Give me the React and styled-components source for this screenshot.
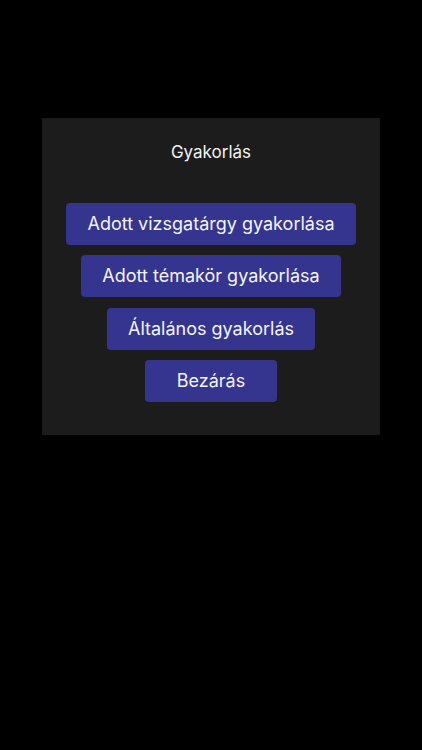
import React from "react";
import styled, { createGlobalStyle } from "styled-components";

const Global = createGlobalStyle`
  html, body {
    margin: 0;
    padding: 0;
    background: #000;
  }
  body {
    font-family: Inter, "Noto Sans", sans-serif;
    -webkit-font-smoothing: antialiased;
  }
`;

const Screen = styled.div`
  width: 422px;
  height: 750px;
  background: #000;
  display: flex;
  flex-direction: column;
  align-items: center;
  padding-top: 118px;
  box-sizing: border-box;
`;

const Dialog = styled.div`
  width: 338px;
  background: #1c1c1c;
  display: flex;
  flex-direction: column;
  align-items: center;
  padding: 24px 0 33px;
  box-sizing: border-box;
`;

const Title = styled.div`
  color: #f2f2f2;
  font-size: 17px;
  line-height: 20px;
  margin-bottom: 41px;
`;

const Actions = styled.div`
  display: flex;
  flex-direction: column;
  align-items: center;
  gap: 10.4px;
`;

const Button = styled.button`
  height: 42px;
  padding: 0 ${(p) => p.$pad || 21}px;
  border: none;
  border-radius: 4px;
  background: #35358f;
  color: #f4f4f8;
  font-family: inherit;
  font-size: 18px;
  line-height: 22px;
  cursor: pointer;
`;

export default function App() {
  return (
    <>
      <Global />
      <Screen>
        <Dialog>
          <Title>Gyakorlás</Title>
          <Actions>
            <Button>Adott vizsgatárgy gyakorlása</Button>
            <Button>Adott témakör gyakorlása</Button>
            <Button>Általános gyakorlás</Button>
            <Button $pad={32}>Bezárás</Button>
          </Actions>
        </Dialog>
      </Screen>
    </>
  );
}
